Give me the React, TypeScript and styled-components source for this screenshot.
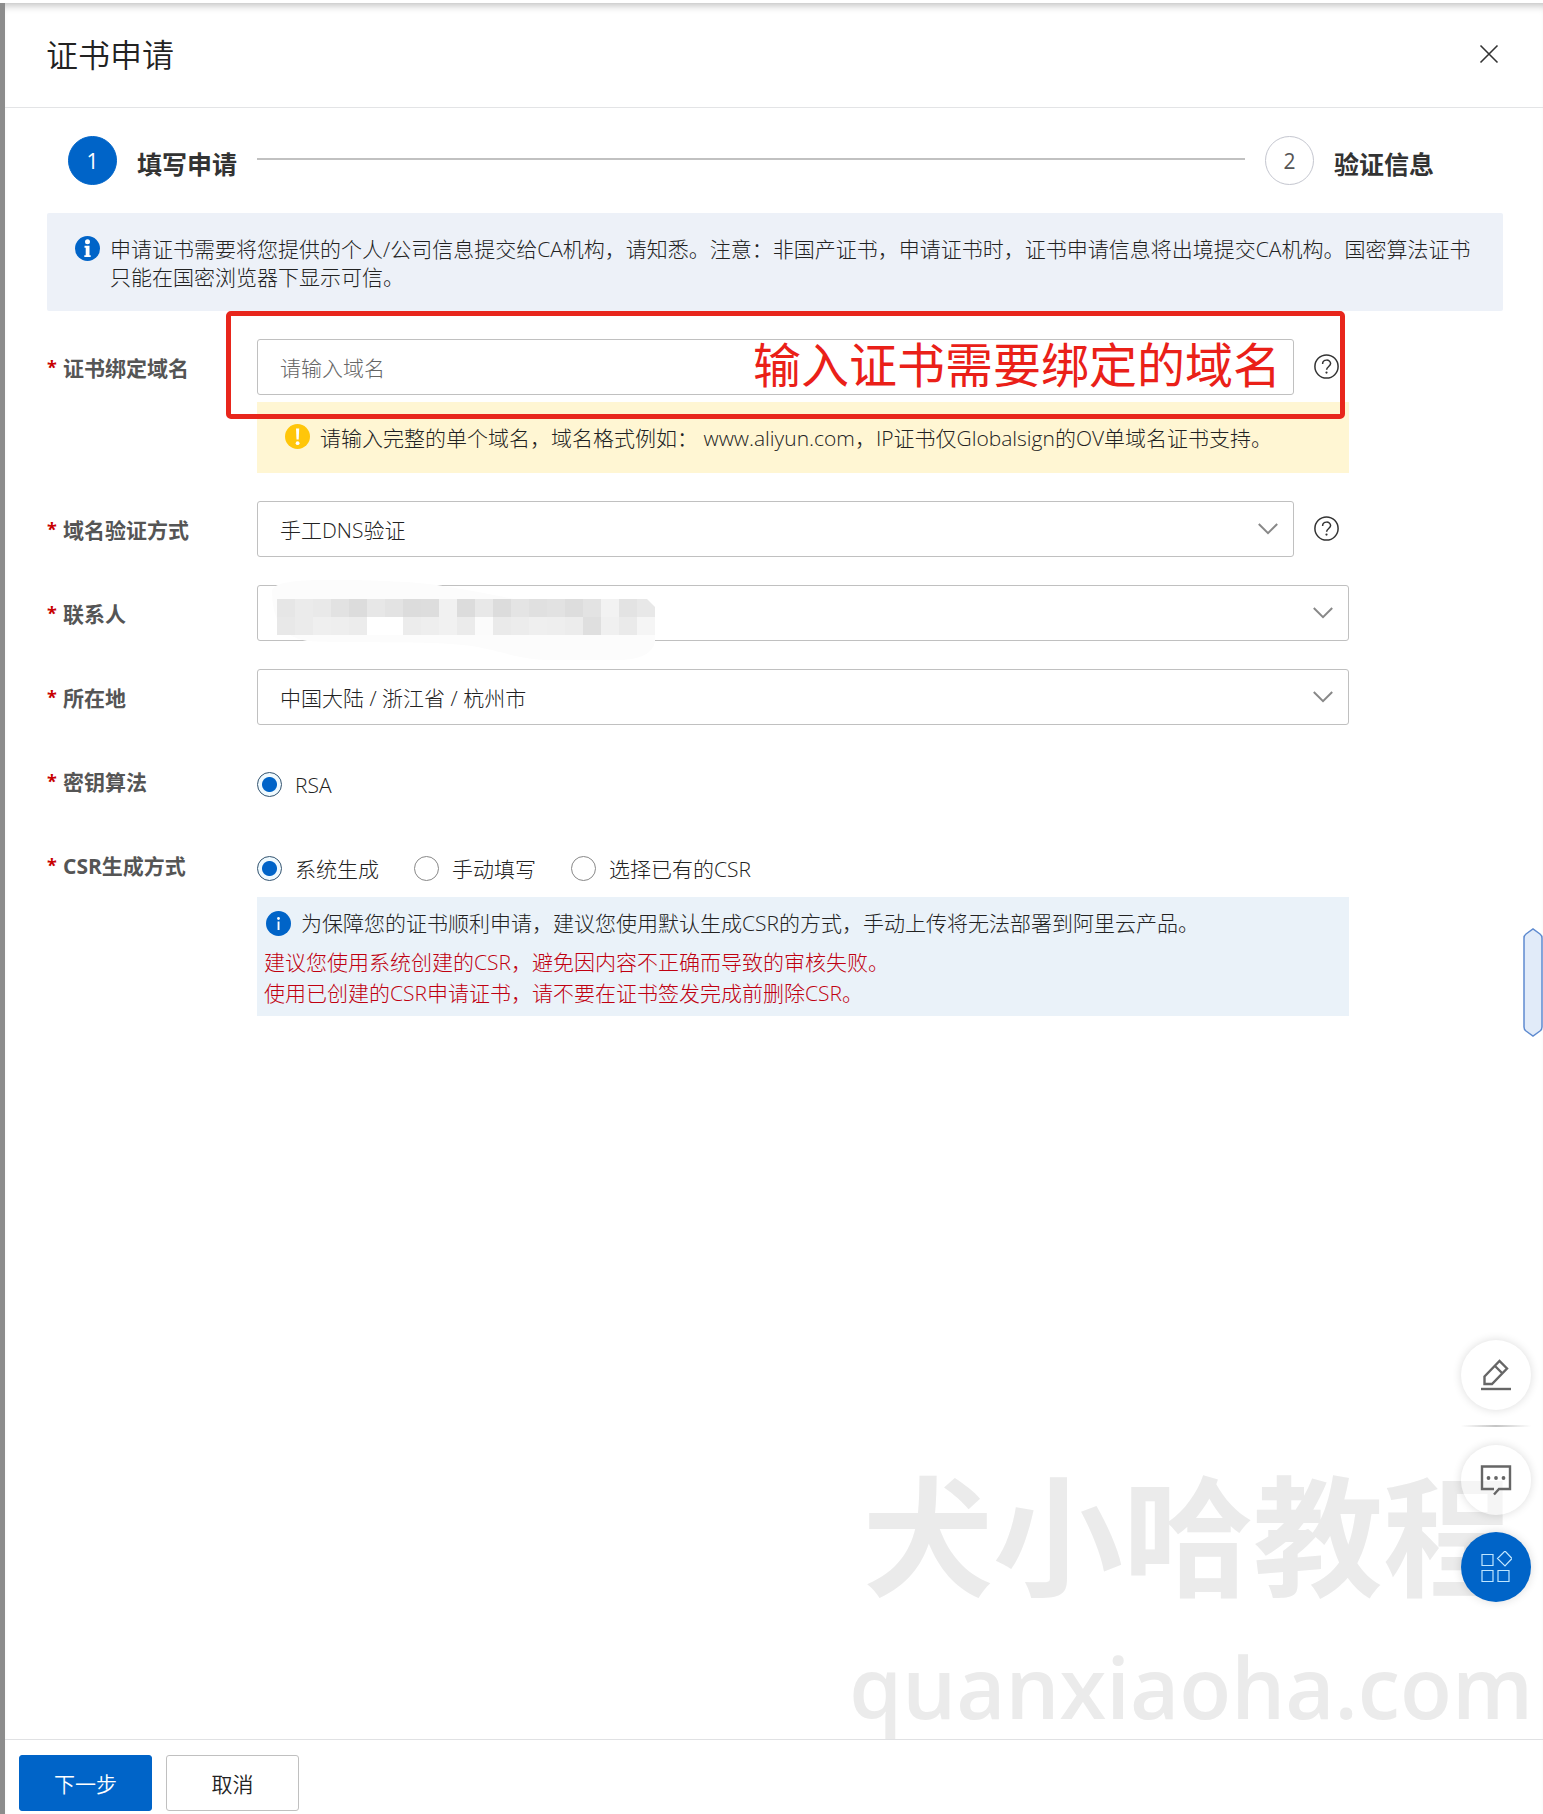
import React, { useState } from "react";
import styled, { createGlobalStyle } from "styled-components";

const fontStack = '"Open Sans", "Noto Sans CJK SC", sans-serif';

const GlobalStyle = createGlobalStyle`
  * { box-sizing: border-box; }
  body {
    margin: 0;
    background: #fff;
    color: #222;
    font-family: ${fontStack};
    font-size: 21px;
    line-height: 28px;
    font-weight: 300;
  }
  button, input, select { font: inherit; color: inherit; }
`;

const Page = styled.div`
  display: flex;
  min-height: 100vh;
  padding-top: 3px;
`;

const Mask = styled.div`
  flex: 0 0 5px;
  background: #8c8c8c;
`;

const Drawer = styled.section`
  flex: 1;
  min-width: 0;
  display: flex;
  flex-direction: column;
  background: #fff;
  box-shadow: inset 0 8px 8px -6px rgba(0, 0, 0, 0.28);
`;

const Header = styled.header`
  display: flex;
  align-items: center;
  justify-content: space-between;
  height: 105px;
  padding: 0 40px 2px 41px;
  border-bottom: 1px solid #e3e4e6;
`;

const Title = styled.h1`
  margin: 0;
  padding-top: 2px;
  font-size: 32px;
  line-height: 48px;
  font-weight: 350;
  color: #222;
`;

const IconButton = styled.button`
  display: flex;
  padding: 4px;
  border: 0;
  background: none;
  cursor: pointer;
`;

const Content = styled.main`
  flex: 1;
  padding: 28px 40px 28px 42px;
`;

const Steps = styled.ol`
  display: flex;
  align-items: center;
  gap: 20px;
  margin: 0 0 28px;
  padding: 0 69px 0 21px;
  list-style: none;
`;

const Step = styled.li`
  display: flex;
  align-items: center;
  gap: 20px;
`;

const StepNumber = styled.span<{ $active?: boolean }>`
  display: flex;
  align-items: center;
  justify-content: center;
  width: 49px;
  height: 49px;
  border-radius: 50%;
  border: 1px solid ${(p) => (p.$active ? "#0064c8" : "#c4c6cf")};
  background: ${(p) => (p.$active ? "#0064c8" : "#fff")};
  color: ${(p) => (p.$active ? "#fff" : "#555")};
  font-weight: 400;
`;

const StepLabel = styled.span`
  padding-top: 6px;
  font-size: 25px;
  line-height: 36px;
  font-weight: 700;
  color: #333;
`;

const StepLine = styled.li`
  flex: 1;
  height: 2px;
  margin-bottom: 4px;
  background: #c1c1c1;
`;

const Banner = styled.div`
  display: flex;
  gap: 10px;
  padding: 23px 26px 19px 28px;
  border-radius: 2px;
  background: #edf1f8;
  svg { flex: none; }
`;

const BannerText = styled.p`
  margin: -1px 0 1px;
  line-height: 28px;
`;

const Form = styled.form`
  display: flex;
  flex-direction: column;
  gap: 28px;
  margin-top: 28px;
`;

const Row = styled.div`
  display: grid;
  grid-template-columns: 210px 75%;
`;

const LabelBox = styled.div`
  display: flex;
  gap: 7px;
  height: 56px;
  padding-top: 1px;
  line-height: 56px;
  font-weight: 700;
  color: #555;
  &::before {
    content: "*";
    width: 9px;
    font-size: 18px;
    line-height: 54px;
    color: #c80000;
  }
`;

const Control = styled.div`
  position: relative;
`;

const Line = styled.div`
  display: flex;
  align-items: center;
  gap: 20px;
`;

const FieldBox = styled.div<{ $short?: boolean }>`
  position: relative;
  flex: 0 0 ${(p) => (p.$short ? "95%" : "100%")};
`;

const fieldStyle = `
  display: block;
  width: 100%;
  height: 56px;
  padding: 2px 22px 0;
  border: 1px solid #c0c0c0;
  border-radius: 3px;
  background: #fff;
  outline: none;
`;

const TextInput = styled.input`
  ${fieldStyle}
  &::placeholder { color: #666; opacity: 1; }
`;

const Select = styled.select`
  ${fieldStyle}
  appearance: none;
`;

const Chevron = styled.svg`
  position: absolute;
  top: 22px;
  right: 16px;
  pointer-events: none;
`;

const Mosaic = styled.svg`
  position: absolute;
  top: -7px;
  left: 10px;
  pointer-events: none;
`;

const Warning = styled.div`
  display: flex;
  gap: 10px;
  margin-top: 7px;
  padding: 22px 28px 21px;
  background: #fff6d3;
  svg { flex: none; }
`;

const RadioGroup = styled.div`
  display: flex;
  align-items: center;
  gap: 35px;
  height: 56px;
  padding-top: 6px;
`;

const RadioLabel = styled.label`
  display: flex;
  align-items: center;
  gap: 13px;
`;

const Radio = styled.input`
  appearance: none;
  width: 25px;
  height: 25px;
  margin: 0;
  border: 1px solid #888;
  border-radius: 50%;
  background: #fff;
  &:checked {
    border-color: #33536f;
    background: radial-gradient(circle, #0064c8 0 7px, #effaff 8px);
  }
`;

const RadioText = styled.span`
  padding-top: 2px;
`;

const CsrNote = styled.div`
  margin-top: 4px;
  padding: 12px 7px 7px;
  background: #eaf2f9;
`;

const NoteHead = styled.p`
  display: flex;
  align-items: center;
  gap: 10px;
  margin: 0 0 10px 2px;
`;

const NoteAlert = styled.p`
  margin: 0;
  line-height: 31px;
  color: #c00010;
`;

const Annotation = styled.div`
  position: absolute;
  top: -28px;
  left: -31px;
  right: 4px;
  height: 108px;
  padding: 13px 59px;
  border: 5px solid #e8261c;
  border-radius: 5px;
  color: #ea2018;
  font-size: 48px;
  line-height: 72px;
  font-weight: 400;
  text-align: right;
  pointer-events: none;
`;

const Footer = styled.footer`
  display: flex;
  gap: 14px;
  padding: 15px 14px 3px;
  border-top: 1px solid #e0e1e3;
`;

const FooterButton = styled.button<{ $primary?: boolean }>`
  width: 133px;
  height: 56px;
  padding: 2px 0 0;
  border: 1px solid ${(p) => (p.$primary ? "#0064c8" : "#c0c0c0")};
  border-radius: 3px;
  background: ${(p) => (p.$primary ? "#0064c8" : "#fff")};
  color: ${(p) => (p.$primary ? "#fff" : "#222")};
  font-weight: 350;
  cursor: pointer;
`;

const Watermark = styled.div`
  position: fixed;
  right: 10px;
  bottom: 60px;
  display: flex;
  flex-direction: column;
  align-items: flex-end;
  color: #ebebeb;
  pointer-events: none;
`;

const WatermarkName = styled.span`
  margin-right: 20px;
  font-size: 130px;
  line-height: 164px;
  font-weight: 700;
`;

const WatermarkSite = styled.span`
  font-size: 85px;
  line-height: 136px;
  font-weight: 600;
`;

const Tools = styled.div`
  position: fixed;
  right: 12px;
  bottom: 212px;
  display: flex;
  flex-direction: column;
  align-items: center;
`;

const ToolButton = styled.button<{ $kind?: "clear" | "primary" }>`
  display: flex;
  align-items: center;
  justify-content: center;
  width: 70px;
  height: 70px;
  padding: 0;
  border: 0;
  border-radius: 50%;
  background: ${(p) =>
    p.$kind === "primary" ? "#0064c8" : p.$kind === "clear" ? "rgba(255, 255, 255, 0.5)" : "#fff"};
  box-shadow: 0 0 10px rgba(0, 0, 0, 0.14);
  cursor: pointer;
  & + & { margin-top: 17px; }
`;

const ToolDivider = styled.div`
  width: 70px;
  height: 2px;
  margin: 15px 0 18px;
  background: linear-gradient(90deg, transparent, #c4c4c4, transparent);
`;

const SideTab = styled.button`
  position: fixed;
  top: 928px;
  right: 0;
  display: flex;
  padding: 0;
  border: 0;
  background: none;
`;

const InfoIcon = ({ thin }: { thin?: boolean }) => (
  <svg width="25" height="25" viewBox="0 0 25 25" aria-hidden="true">
    <circle cx="12.5" cy="12.5" r="12.5" fill="#0064c8" />
    {thin ? (
      <g fill="#fff">
        <circle cx="12.5" cy="7.5" r="1.4" />
        <rect x="11.6" y="10.5" width="1.9" height="8.5" />
      </g>
    ) : (
      <g fill="#fff">
        <circle cx="12.5" cy="5.7" r="2.5" />
        <path d="M9.5 9.8h5v9.4h1.2v1.8H9.3v-1.8h1.4v-7.5H9.5z" />
      </g>
    )}
  </svg>
);

const WarnIcon = () => (
  <svg width="25" height="25" viewBox="0 0 25 25" aria-hidden="true">
    <circle cx="12.5" cy="12.5" r="12.5" fill="#ffc60a" />
    <path d="M11 4.5h3.2l-.5 11h-2.2z" fill="#fff" />
    <circle cx="12.6" cy="19.2" r="1.9" fill="#fff" />
  </svg>
);

const HelpIcon = () => (
  <svg width="25" height="25" viewBox="0 0 25 25" fill="none" stroke="#333" strokeWidth="1.5" aria-hidden="true">
    <circle cx="12.5" cy="12.5" r="11.6" />
    <path d="M8.6 10c0-5.2 8-5 8-.4 0 2.9-4 2.9-4 6.2" />
    <circle cx="12.5" cy="18.6" r="1.1" fill="#333" stroke="none" />
  </svg>
);

const HelpButton = styled(IconButton)`
  padding: 0 0 2px;
`;

const Help = ({ label }: { label: string }) => (
  <HelpButton type="button" aria-label={label}>
    <HelpIcon />
  </HelpButton>
);

const Arrow = () => (
  <Chevron width="20" height="12" viewBox="0 0 20 12" fill="none" stroke="#888" strokeWidth="2" aria-hidden="true">
    <path d="M0.8 1L10 10.2L19.2 1" />
  </Chevron>
);

const upperCells = "e6 eb e9 e2 dc e7 e3 dc dd f1 dc e8 dc e4 e0 e2 dd e3 f2 e3 e8".split(" ");
const lowerCells = "e8 eb ef ee ec ff ff ec ee f1 eb fb ea ec ef ee ec df f0 ea f5".split(" ");

const ContactMosaic = () => (
  <Mosaic width="392" height="84" viewBox="0 0 392 84" aria-hidden="true">
    <clipPath id="mosaic-edge">
      <path d="M0 0H380L388 8V52H0z" transform="translate(0 21)" />
    </clipPath>
    <path
      d="M5 13C6 4 30 2 60 2C110 2 150 4 170 7C200 12 235 18 250 22H375Q388 26 388 40V64Q384 82 350 82H290C250 82 240 74 205 68C160 62 90 66 40 63Q5 58 5 13z"
      fill="#fcfcfc"
    />
    <g clipPath="url(#mosaic-edge)" shapeRendering="crispEdges">
      {upperCells.map((c, i) => (
        <rect key={i} x={10 + i * 18} y="21" width="18" height="18" fill={`#${c}${c}${c}`} />
      ))}
      {lowerCells.map((c, i) => (
        <rect key={i} x={10 + i * 18} y="39" width="18" height="18" fill={`#${c}${c}${c}`} />
      ))}
    </g>
  </Mosaic>
);

const csrModes = ["系统生成", "手动填写", "选择已有的CSR"];

export default function App() {
  const [csrMode, setCsrMode] = useState(csrModes[0]);

  return (
    <>
      <GlobalStyle />
      <Page>
        <Mask />
        <Drawer>
          <Header>
            <Title>证书申请</Title>
            <IconButton type="button" aria-label="关闭">
              <svg width="20" height="20" viewBox="0 0 20 20" stroke="#333" strokeWidth="1.6" aria-hidden="true">
                <path d="M1.5 1.5L18.5 18.5M18.5 1.5L1.5 18.5" />
              </svg>
            </IconButton>
          </Header>

          <Content>
            <Steps>
              <Step>
                <StepNumber $active>1</StepNumber>
                <StepLabel>填写申请</StepLabel>
              </Step>
              <StepLine aria-hidden="true" />
              <Step>
                <StepNumber>2</StepNumber>
                <StepLabel>验证信息</StepLabel>
              </Step>
            </Steps>

            <Banner>
              <InfoIcon />
              <BannerText>
                申请证书需要将您提供的个人/公司信息提交给CA机构，请知悉。注意：非国产证书，申请证书时，证书申请信息将出境提交CA机构。国密算法证书只能在国密浏览器下显示可信。
              </BannerText>
            </Banner>

            <Form>
              <Row>
                <LabelBox>
                  <label htmlFor="domain">证书绑定域名</label>
                </LabelBox>
                <Control>
                  <Line>
                    <FieldBox $short>
                      <TextInput id="domain" type="text" placeholder="请输入域名" />
                    </FieldBox>
                    <Help label="域名说明" />
                  </Line>
                  <Warning>
                    <WarnIcon />
                    <span>请输入完整的单个域名，域名格式例如： www.aliyun.com，IP证书仅Globalsign的OV单域名证书支持。</span>
                  </Warning>
                  <Annotation>输入证书需要绑定的域名</Annotation>
                </Control>
              </Row>

              <Row>
                <LabelBox>
                  <label htmlFor="verify">域名验证方式</label>
                </LabelBox>
                <Control>
                  <Line>
                    <FieldBox $short>
                      <Select id="verify">
                        <option>手工DNS验证</option>
                      </Select>
                      <Arrow />
                    </FieldBox>
                    <Help label="验证方式说明" />
                  </Line>
                </Control>
              </Row>

              <Row>
                <LabelBox>
                  <label htmlFor="contact">联系人</label>
                </LabelBox>
                <FieldBox>
                  <Select id="contact">
                    <option></option>
                  </Select>
                  <ContactMosaic />
                  <Arrow />
                </FieldBox>
              </Row>

              <Row>
                <LabelBox>
                  <label htmlFor="region">所在地</label>
                </LabelBox>
                <FieldBox>
                  <Select id="region">
                    <option>中国大陆 / 浙江省 / 杭州市</option>
                  </Select>
                  <Arrow />
                </FieldBox>
              </Row>

              <Row role="radiogroup" aria-labelledby="key-label">
                <LabelBox>
                  <span id="key-label">密钥算法</span>
                </LabelBox>
                <RadioGroup>
                  <RadioLabel>
                    <Radio type="radio" name="key" defaultChecked />
                    <RadioText>RSA</RadioText>
                  </RadioLabel>
                </RadioGroup>
              </Row>

              <Row role="radiogroup" aria-labelledby="csr-label">
                <LabelBox>
                  <span id="csr-label">CSR生成方式</span>
                </LabelBox>
                <Control>
                  <RadioGroup>
                    {csrModes.map((mode) => (
                      <RadioLabel key={mode}>
                        <Radio type="radio" name="csr" checked={csrMode === mode} onChange={() => setCsrMode(mode)} />
                        <RadioText>{mode}</RadioText>
                      </RadioLabel>
                    ))}
                  </RadioGroup>
                  <CsrNote>
                    <NoteHead>
                      <InfoIcon thin />
                      为保障您的证书顺利申请，建议您使用默认生成CSR的方式，手动上传将无法部署到阿里云产品。
                    </NoteHead>
                    <NoteAlert>建议您使用系统创建的CSR，避免因内容不正确而导致的审核失败。</NoteAlert>
                    <NoteAlert>使用已创建的CSR申请证书，请不要在证书签发完成前删除CSR。</NoteAlert>
                  </CsrNote>
                </Control>
              </Row>
            </Form>
          </Content>

          <Footer>
            <FooterButton type="button" $primary>
              下一步
            </FooterButton>
            <FooterButton type="button">取消</FooterButton>
          </Footer>
        </Drawer>
      </Page>

      <Watermark aria-hidden="true">
        <WatermarkName>犬小哈教程</WatermarkName>
        <WatermarkSite>quanxiaoha.com</WatermarkSite>
      </Watermark>

      <SideTab type="button" aria-label="展开侧栏">
        <svg width="20" height="109" viewBox="0 0 20 109" aria-hidden="true">
          <path
            d="M1 10Q1 7.5 3 6L10 1L17 6Q19 7.5 19 10V99Q19 101.5 17 103L10 108L3 103Q1 101.5 1 99z"
            fill="#e1ebf9"
            stroke="#5f8bd0"
            strokeWidth="1.5"
          />
        </svg>
      </SideTab>

      <Tools>
        <ToolButton type="button" aria-label="编辑">
          <svg width="32" height="32" viewBox="0 0 32 32" fill="none" stroke="#666" strokeWidth="2.4" aria-hidden="true">
            <path d="M4.5 17.5L19.5 2L27 9.5L12 25H4.5zM14.5 6.5L22.5 14.5" />
            <path d="M1 30H31" />
          </svg>
        </ToolButton>
        <ToolDivider />
        <ToolButton type="button" $kind="clear" aria-label="反馈">
          <svg width="32" height="32" viewBox="0 0 32 32" fill="none" stroke="#666" strokeWidth="2.4" aria-hidden="true">
            <path d="M14 25H2V2.5H30V25H19L14 30.5" />
            <g fill="#666" stroke="none">
              <circle cx="8.5" cy="14" r="1.9" />
              <circle cx="16" cy="14" r="1.9" />
              <circle cx="23.5" cy="14" r="1.9" />
            </g>
          </svg>
        </ToolButton>
        <ToolButton type="button" $kind="primary" aria-label="应用">
          <svg width="32" height="32" viewBox="0 0 32 32" fill="none" stroke="#bfe6ff" strokeWidth="1.2" aria-hidden="true">
            <path d="M2 3.5h11v11H2zM2 19.5h11v11H2zM18 19.5h11v11H18zM25 0L32 7.5L25 15L17.5 7.5z" />
          </svg>
        </ToolButton>
      </Tools>
    </>
  );
}
